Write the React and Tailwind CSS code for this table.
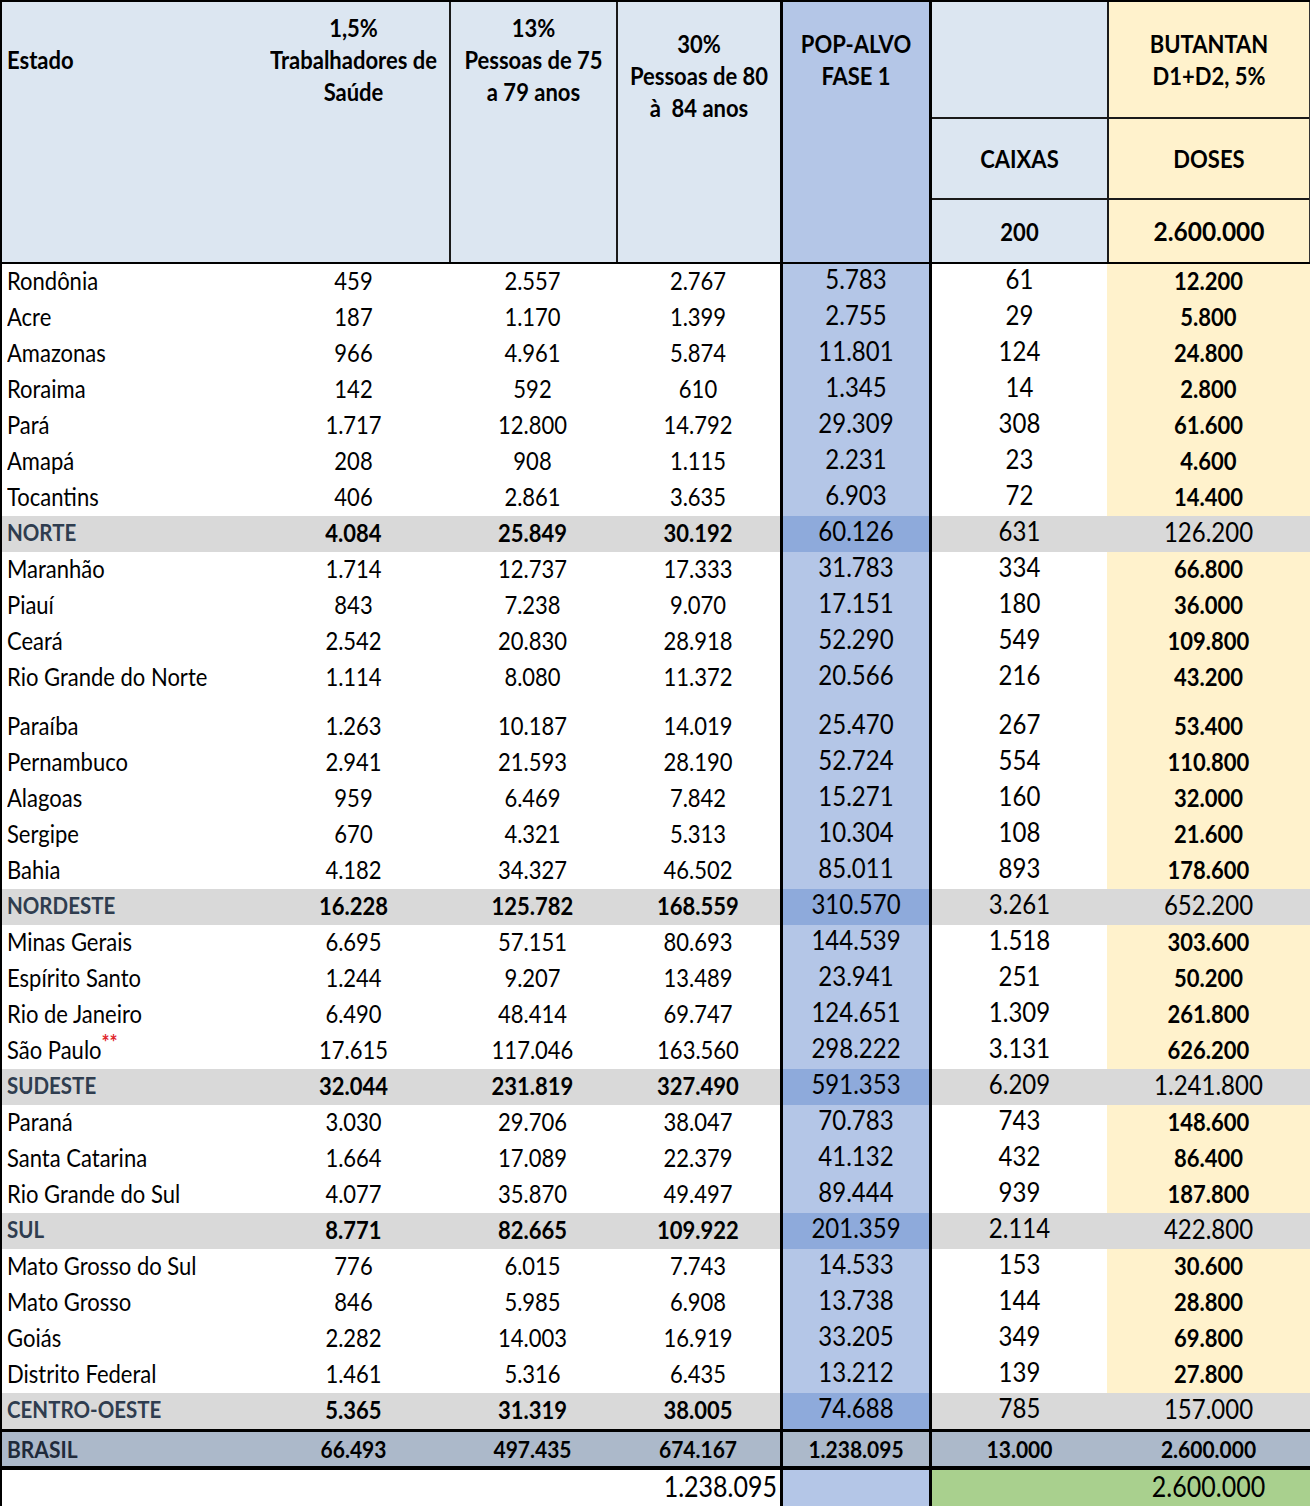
import React from "react";

// column widths (left border of 2px sits outside these)
const W = ["w-[256px]", "w-[191px]", "w-[167px]", "w-[164px]", "w-[152px]", "w-[175px]", "w-[203px]"];

const data = [
  ["Rondônia", "459", "2.557", "2.767", "5.783", "61", "12.200"],
  ["Acre", "187", "1.170", "1.399", "2.755", "29", "5.800"],
  ["Amazonas", "966", "4.961", "5.874", "11.801", "124", "24.800"],
  ["Roraima", "142", "592", "610", "1.345", "14", "2.800"],
  ["Pará", "1.717", "12.800", "14.792", "29.309", "308", "61.600"],
  ["Amapá", "208", "908", "1.115", "2.231", "23", "4.600"],
  ["Tocantins", "406", "2.861", "3.635", "6.903", "72", "14.400"],
  ["NORTE", "4.084", "25.849", "30.192", "60.126", "631", "126.200", "region"],
  ["Maranhão", "1.714", "12.737", "17.333", "31.783", "334", "66.800"],
  ["Piauí", "843", "7.238", "9.070", "17.151", "180", "36.000"],
  ["Ceará", "2.542", "20.830", "28.918", "52.290", "549", "109.800"],
  ["Rio Grande do Norte", "1.114", "8.080", "11.372", "20.566", "216", "43.200", "tall"],
  ["Paraíba", "1.263", "10.187", "14.019", "25.470", "267", "53.400"],
  ["Pernambuco", "2.941", "21.593", "28.190", "52.724", "554", "110.800"],
  ["Alagoas", "959", "6.469", "7.842", "15.271", "160", "32.000"],
  ["Sergipe", "670", "4.321", "5.313", "10.304", "108", "21.600"],
  ["Bahia", "4.182", "34.327", "46.502", "85.011", "893", "178.600"],
  ["NORDESTE", "16.228", "125.782", "168.559", "310.570", "3.261", "652.200", "region"],
  ["Minas Gerais", "6.695", "57.151", "80.693", "144.539", "1.518", "303.600"],
  ["Espírito Santo", "1.244", "9.207", "13.489", "23.941", "251", "50.200"],
  ["Rio de Janeiro", "6.490", "48.414", "69.747", "124.651", "1.309", "261.800"],
  ["São Paulo", "17.615", "117.046", "163.560", "298.222", "3.131", "626.200", "sp"],
  ["SUDESTE", "32.044", "231.819", "327.490", "591.353", "6.209", "1.241.800", "region"],
  ["Paraná", "3.030", "29.706", "38.047", "70.783", "743", "148.600"],
  ["Santa Catarina", "1.664", "17.089", "22.379", "41.132", "432", "86.400"],
  ["Rio Grande do Sul", "4.077", "35.870", "49.497", "89.444", "939", "187.800"],
  ["SUL", "8.771", "82.665", "109.922", "201.359", "2.114", "422.800", "region"],
  ["Mato Grosso do Sul", "776", "6.015", "7.743", "14.533", "153", "30.600"],
  ["Mato Grosso", "846", "5.985", "6.908", "13.738", "144", "28.800"],
  ["Goiás", "2.282", "14.003", "16.919", "33.205", "349", "69.800"],
  ["Distrito Federal", "1.461", "5.316", "6.435", "13.212", "139", "27.800"],
  ["CENTRO-OESTE", "5.365", "31.319", "38.005", "74.688", "785", "157.000", "region"],
];

// the excel screenshot is a bit stretched vertically, so text gets a small y-scale
const T = ({ children, className = "" }) => (
  <span className={"inline-block scale-y-[1.12] whitespace-nowrap " + className}>{children}</span>
);

const HLine = ({ children }) => (
  <div className="h-8 flex items-center justify-center">
    <T>{children}</T>
  </div>
);

const Header = () => (
  <div className="flex h-[264px] border-t-2 border-b-2 border-black font-bold text-[22px] text-black">
    <div className={W[0] + " bg-[#dce6f1] pl-[5px] pt-[41px]"}>
      <div className="h-8 flex items-center">
        <T>Estado</T>
      </div>
    </div>
    <div className={W[1] + " bg-[#dce6f1] pt-[9px]"}>
      <HLine>1,5%</HLine>
      <HLine>Trabalhadores de</HLine>
      <HLine>Saúde</HLine>
    </div>
    <div className={W[2] + " bg-[#dce6f1] border-l-2 border-[#1a1a1a] pt-[9px]"}>
      <HLine>13%</HLine>
      <HLine>Pessoas de 75</HLine>
      <HLine>a 79 anos</HLine>
    </div>
    <div className={W[3] + " bg-[#dce6f1] border-l-2 border-[#1a1a1a] pt-[25px]"}>
      <HLine>30%</HLine>
      <HLine>Pessoas de 80</HLine>
      <HLine>à&nbsp; 84 anos</HLine>
    </div>
    <div className={W[4] + " bg-[#b4c6e7] border-x-[3px] border-black pt-[25px]"}>
      <HLine>POP-ALVO</HLine>
      <HLine>FASE 1</HLine>
    </div>
    <div className="flex-1 flex flex-col border-r border-[#333]">
      <div className="flex h-[117px] border-b-2 border-[#1a1a1a]">
        <div className={W[5] + " bg-[#dce6f1]"} />
        <div className="flex-1 bg-[#fff2cc] border-l-2 border-[#1a1a1a] flex flex-col justify-center">
          <HLine>BUTANTAN</HLine>
          <HLine>D1+D2, 5%</HLine>
        </div>
      </div>
      <div className="flex h-[81px] border-b-2 border-[#1a1a1a]">
        <div className={W[5] + " bg-[#dce6f1] flex items-center justify-center"}>
          <T>CAIXAS</T>
        </div>
        <div className="flex-1 bg-[#fff2cc] border-l-2 border-[#1a1a1a] flex items-center justify-center">
          <T>DOSES</T>
        </div>
      </div>
      <div className="flex flex-1">
        <div className={W[5] + " bg-[#dce6f1] flex items-center justify-center"}>
          <T>200</T>
        </div>
        <div className="flex-1 bg-[#fff2cc] border-l-2 border-[#1a1a1a] flex items-center justify-center text-[24.5px]">
          <T>2.600.000</T>
        </div>
      </div>
    </div>
  </div>
);

const Row = ({ r }) => {
  const kind = r[7];
  const region = kind === "region";
  const rowH = kind === "tall" ? "h-[49px]" : "h-9";
  const base = region ? "bg-[#d9d9d9]" : "bg-white";
  const cell = "flex items-start";
  const inner = "h-9 w-full flex items-center";
  return (
    <div className={"flex " + rowH}>
      <div className={W[0] + " " + cell + " " + base}>
        <div className={inner + " pl-[5px] -mt-[2px]"}>
          <T className={region ? "font-bold text-[#2f3d4f] text-[20.5px]" : "text-[22px]"}>
            {r[0]}
            {kind === "sp" && (
              <span className="text-[#e0242a] font-bold text-[19px] align-top leading-none">**</span>
            )}
          </T>
        </div>
      </div>
      {[1, 2, 3].map((i) => (
        <div key={i} className={W[i] + " " + cell + " " + base}>
          <div className={inner + " justify-center -mt-[2px]"}>
            <T className={region ? "font-bold text-[22px]" : "text-[22px]"}>{r[i]}</T>
          </div>
        </div>
      ))}
      <div
        className={
          W[4] + " " + cell + " border-x-[3px] border-black " + (region ? "bg-[#8eaadb]" : "bg-[#b4c6e7]")
        }
      >
        <div className={inner + " justify-center -mt-[3px]"}>
          <T className="text-[24px]">{r[4]}</T>
        </div>
      </div>
      <div className={W[5] + " " + cell + " " + base}>
        <div className={inner + " justify-center -mt-[3px]"}>
          <T className="text-[24px]">{r[5]}</T>
        </div>
      </div>
      <div className={W[6] + " " + cell + " " + (region ? "bg-[#d9d9d9]" : "bg-[#fff2cc]")}>
        <div className={inner + " justify-center -mt-[2px]"}>
          {region ? <T className="text-[24px]">{r[6]}</T> : <T className="font-bold text-[22px]">{r[6]}</T>}
        </div>
      </div>
    </div>
  );
};

const BrasilRow = () => {
  const vals = ["66.493", "497.435", "674.167", "1.238.095", "13.000", "2.600.000"];
  return (
    <div className="flex h-[41px] border-t-[3px] border-b-[4px] border-black bg-[#acb9ca] font-bold text-[21px]">
      <div className={W[0] + " flex items-center pl-[5px] text-[#1f2a3a]"}>
        <T>BRASIL</T>
      </div>
      {vals.map((v, i) => (
        <div
          key={v}
          className={
            W[i + 1] + " flex items-center justify-center" + (i === 3 ? " border-x-[3px] border-black" : "")
          }
        >
          <T>{v}</T>
        </div>
      ))}
    </div>
  );
};

const LastRow = () => (
  <div className="flex h-9 text-[25px]">
    <div className={W[0] + " bg-white"} />
    <div className={W[1] + " bg-white"} />
    <div className={W[2] + " bg-white"} />
    <div className={W[3] + " bg-white flex items-center justify-end pr-[3px] pb-[3px]"}>
      <T>1.238.095</T>
    </div>
    <div className={W[4] + " bg-[#b4c6e7] border-x-[3px] border-black"} />
    <div className={W[5] + " bg-[#a9d08e]"} />
    <div className={W[6] + " bg-[#a9d08e] flex items-center justify-center pb-[3px]"}>
      <T>2.600.000</T>
    </div>
  </div>
);

export default function App() {
  return (
    <div className="w-[1310px] h-[1509px] bg-white font-[family-name:Lato,sans-serif] text-black overflow-hidden">
      <div className="border-l-2 border-black">
        <Header />
        {data.map((r) => (
          <Row key={r[0]} r={r} />
        ))}
        <BrasilRow />
        <LastRow />
      </div>
    </div>
  );
}
